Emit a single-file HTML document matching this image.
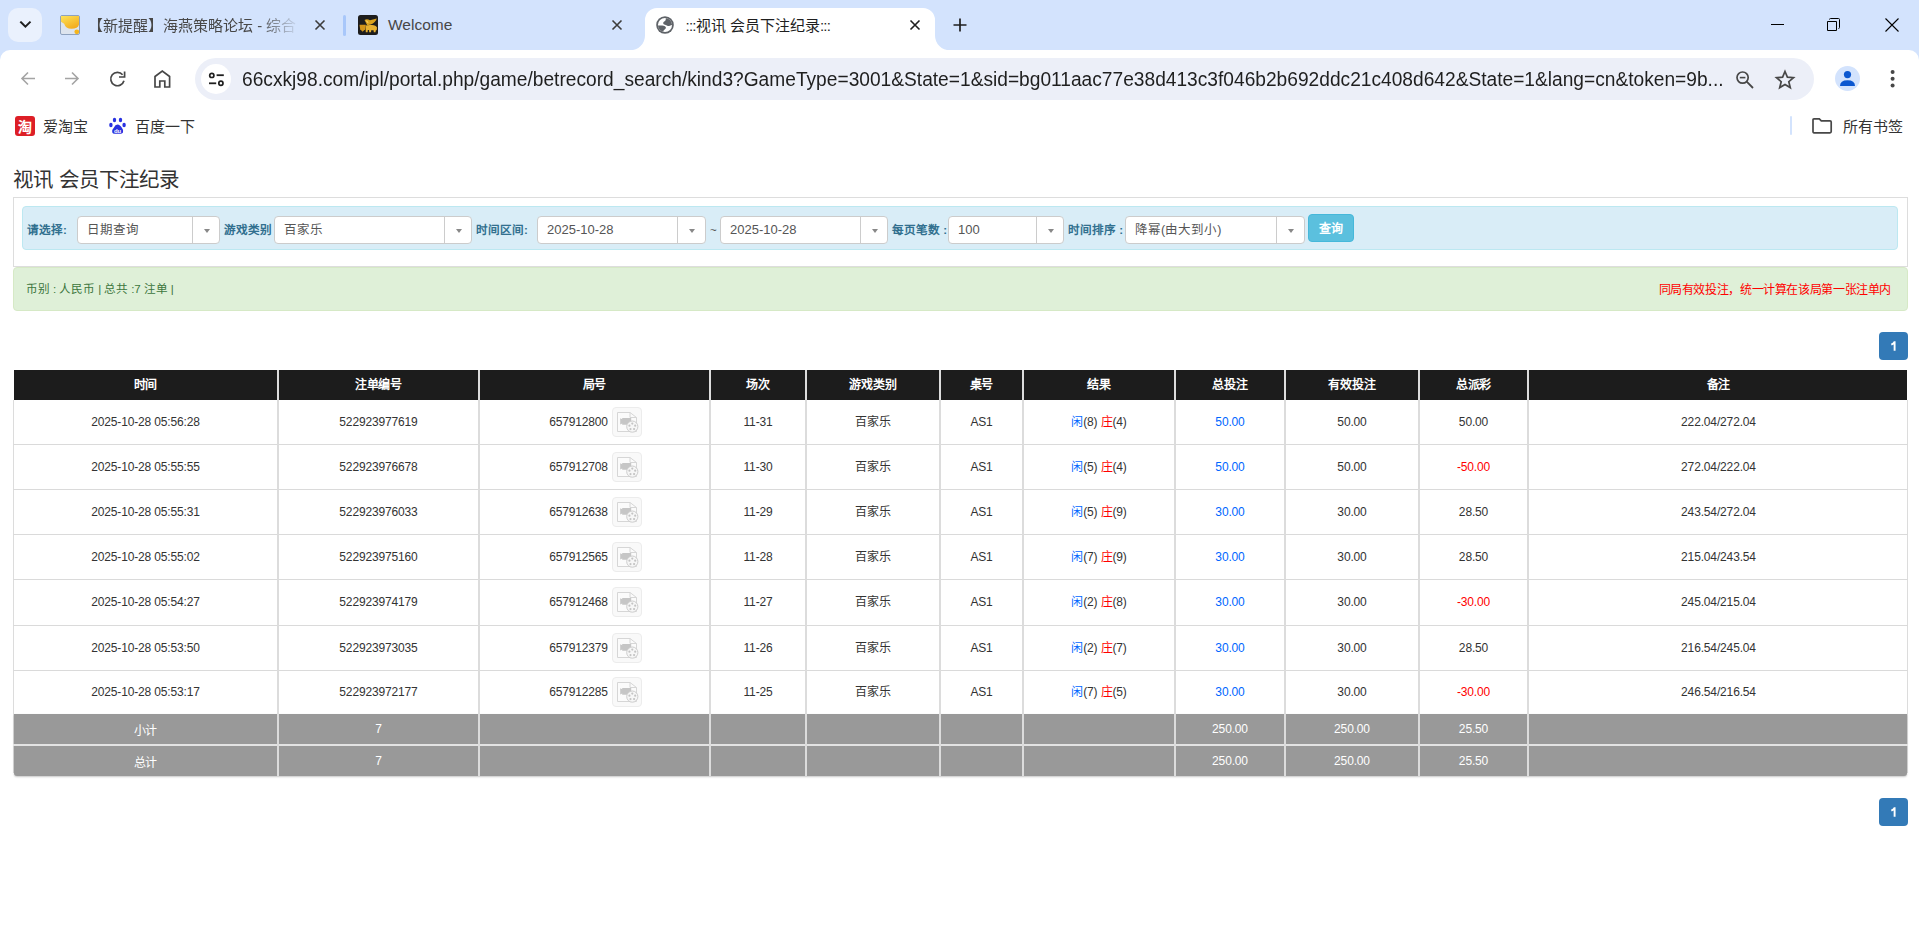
<!DOCTYPE html>
<html lang="zh-CN">
<head>
<meta charset="utf-8">
<title>视讯 会员下注纪录</title>
<style>
*{box-sizing:border-box;margin:0;padding:0}
html,body{width:1919px;height:933px;overflow:hidden;background:#fff}
body{position:relative;font-family:"Liberation Sans",sans-serif;color:#333}
.a{position:absolute}
svg{position:absolute;overflow:visible}
/* chrome */
#strip{left:0;top:0;width:1919px;height:60px;background:#d3e3fd}
#toolbar{left:0;top:50px;width:1919px;height:50px;background:#fff;border-radius:10px 10px 0 0}
.tabtitle{font-size:15px;color:#1f1f1f;white-space:nowrap;line-height:20px}
#omni{left:195px;top:58px;width:1619px;height:42px;border-radius:21px;background:#eceff8}
#url{left:242px;top:67px;font-size:19.5px;line-height:24px;color:#1f1f1f;white-space:nowrap;transform-origin:0 0;transform:scaleX(0.9827)}
.bm{font-size:15px;color:#333;white-space:nowrap;line-height:20px;margin-top:1px}
/* page */
#title{left:13px;top:166px;font-size:20.5px;line-height:28px;color:#333;white-space:nowrap}
#panel{left:13px;top:197px;width:1895px;height:70px;border:1px solid #ddd;background:#fff}
#info{left:22px;top:206px;width:1876px;height:44px;border:1px solid #bce8f1;background:#d9edf7;border-radius:4px}
.lbl{font-size:11.6px;font-weight:bold;color:#31708f;white-space:nowrap;line-height:16px;top:222px}
.sel{top:216px;height:28px;border:1px solid #ccc;background:#fff;border-radius:4px}
.sel .t{position:absolute;left:9px;top:5px;font-size:12.5px;line-height:16px;color:#555;white-space:nowrap}
.sel .d{position:absolute;top:0;bottom:0;width:1px;background:#ccc}
.sel .ar{position:absolute;top:11.5px;width:0;height:0;border-left:3.5px solid transparent;border-right:3.5px solid transparent;border-top:4px solid #888}
#btn{left:1308px;top:214px;width:46px;height:28px;background:#5bc0de;border:1px solid #46b8da;border-radius:4px;color:#fff;font-size:12px;font-weight:bold;line-height:28px;text-align:center}
#ok{left:13px;top:267px;width:1895px;height:44px;border:1px solid #d6e9c6;background:#dff0d8;border-radius:4px}
.c{font-size:12px;letter-spacing:-0.15px;color:#333;text-align:center;white-space:nowrap}
.ic{display:inline-block;position:relative;vertical-align:middle;width:30px;height:30px;margin-left:4px;border:1px solid #ececec;border-radius:4px;background:#f9f9f9;top:-1px}
.pg{left:1879px;width:29px;height:28px;background:#337ab7;border-radius:4px;color:#fff;font-weight:bold;font-size:12px;line-height:28px;text-align:center}
</style>
</head>
<body>
<!-- ============ CHROME FRAME ============ -->
<div id="strip" class="a"></div>
<div id="toolbar" class="a"></div>
<div id="omni" class="a"></div>

<!-- tab search button -->
<div class="a" style="left:8px;top:8px;width:34px;height:34px;border-radius:10px;background:#eaf1fd"></div>
<svg style="left:0;top:0" width="50" height="50"><path d="M21 22.3 L25.4 26.7 L29.8 22.3" fill="none" stroke="#1f1f1f" stroke-width="2" stroke-linecap="square"/></svg>
<!-- tab 1 -->
<svg style="left:60px;top:15px" width="20" height="20"><defs><linearGradient id="yg" x1="0" y1="0" x2="0.6" y2="1"><stop offset="0" stop-color="#fde35a"/><stop offset="1" stop-color="#f3ad1e"/></linearGradient></defs><rect x="0.5" y="0.5" width="19" height="19" rx="1.5" fill="#dde4ee" stroke="#8ea2bf"/><path d="M1 1 H19 V9.5 Q18 13.8 11.5 13.8 Q5.5 13.8 4.2 8.8 L1 6.8 Z" fill="url(#yg)"/><circle cx="16.8" cy="16.8" r="2.4" fill="#f5b51c"/></svg>
<div class="a tabtitle" style="left:88px;top:15.5px;width:212px;color:#474747;overflow:hidden;-webkit-mask-image:linear-gradient(to right,#000 80%,transparent 100%)">【新提醒】海燕策略论坛 - 综合</div>
<svg style="left:315px;top:20px" width="10" height="10"><path d="M0.5 0.5 L9.5 9.5 M9.5 0.5 L0.5 9.5" stroke="#3c3c3c" stroke-width="1.6"/></svg>
<div class="a" style="left:343px;top:15px;width:3px;height:21px;border-radius:2px;background:#a8c7fa"></div>
<!-- tab 2 -->
<svg style="left:358px;top:15px" width="20" height="20"><rect x="0" y="0" width="20" height="20" rx="2.5" fill="#1d1d1d"/><path d="M6.5 5 Q9 3.6 12 5.2 L18.8 3.5 Q17.5 7.5 12.8 9.6 L9.2 10.2 Z" fill="#d9a21f"/><path d="M7.5 10.6 Q10 9.6 14 10 Q18 10 19 12.5 Q19.2 15 17.8 15.5 L17.5 17.3 H15.8 L15.6 15.3 L13.2 15.3 L13 17.3 H11.2 L11 15.1 L9.8 15.1 L9.6 17.3 H7.8 Z" fill="#e6b030"/><path d="M1.5 9.8 L7.8 9.8 L7.2 14.2 L4.6 16.8 L2.2 14.2 Z" fill="#d29419"/><path d="M8 6 Q9.5 5.5 10 8" stroke="#ffe07a" stroke-width="0.8" fill="none"/></svg>
<div class="a tabtitle" style="left:388px;top:15px;color:#474747;font-size:15.5px">Welcome</div>
<svg style="left:612px;top:20px" width="10" height="10"><path d="M0.5 0.5 L9.5 9.5 M9.5 0.5 L0.5 9.5" stroke="#3c3c3c" stroke-width="1.6"/></svg>
<!-- active tab -->
<svg style="left:630px;top:7.5px" width="321" height="43"><path d="M0 42.5 A15 15 0 0 0 15 27.5 L15 12 A12 12 0 0 1 27 0 L293 0 A12 12 0 0 1 305 12 L305 27.5 A15 15 0 0 0 320 42.5 L320 43 L0 43 Z" fill="#fff"/></svg>
<svg style="left:656px;top:16px" width="18" height="18"><defs><clipPath id="gc"><circle cx="9" cy="9" r="7.1"/></clipPath></defs><circle cx="9" cy="9" r="8.8" fill="#5f6368"/><circle cx="9" cy="9" r="7.1" fill="#fff"/><g clip-path="url(#gc)" fill="#5f6368"><path d="M9.8 0 C9.8 3.2 9.9 4.4 9 4.9 C7.4 5.6 6.8 6.8 7.5 8 C8.2 9 10 8.8 11 9.6 C11.7 10.3 13 10.2 13.8 9.8 C14.7 9.3 15.8 9 18 9 L18 0 Z"/><path d="M0 9.4 C3 9.4 6.8 9.2 8.5 10 C10.2 10.8 10.3 12.6 9 13.2 C7.8 13.8 7 14.8 7 18 L0 18 Z"/></g></svg>
<div class="a tabtitle" style="left:685.5px;top:16px"><span style="letter-spacing:-0.75px">:::</span>视讯 会员下注纪录<span style="letter-spacing:-0.75px">:::</span></div>
<svg style="left:910px;top:20px" width="10" height="10"><path d="M0.5 0.5 L9.5 9.5 M9.5 0.5 L0.5 9.5" stroke="#1f1f1f" stroke-width="1.6"/></svg>
<!-- new tab -->
<svg style="left:953px;top:18px" width="14" height="14"><path d="M7 0.5 V13.5 M0.5 7 H13.5" stroke="#1f1f1f" stroke-width="1.7"/></svg>
<!-- window controls -->
<svg style="left:1771px;top:18px" width="14" height="14"><path d="M0 6.5 H13" stroke="#000" stroke-width="1"/></svg>
<svg style="left:1827px;top:18px" width="14" height="14"><path d="M0.5 3.5 H9.5 V12.5 H0.5 Z" fill="none" stroke="#000" stroke-width="1"/><path d="M2.5 1.5 Q2.5 0.5 3.5 0.5 H11.5 Q12.5 0.5 12.5 1.5 V9.5 Q12.5 10.5 11.5 10.5" fill="none" stroke="#000" stroke-width="1"/></svg>
<svg style="left:1885px;top:18px" width="14" height="14"><path d="M0.5 0.5 L13.5 13.5 M13.5 0.5 L0.5 13.5" stroke="#000" stroke-width="1.1"/></svg>
<!-- nav buttons -->
<svg style="left:20px;top:71px" width="16" height="16"><path d="M15 7.5 H2 M8 1.5 L2 7.5 L8 13.5" fill="none" stroke="#a4a4a4" stroke-width="1.6"/></svg>
<svg style="left:65px;top:71px" width="16" height="16"><path d="M0 7.5 H13 M7 1.5 L13 7.5 L7 13.5" fill="none" stroke="#a4a4a4" stroke-width="1.6"/></svg>
<svg style="left:110px;top:71px" width="16" height="16"><path d="M12.63 3.69 A6.7 6.7 0 1 0 13.97 9.73" fill="none" stroke="#474747" stroke-width="1.7"/><path d="M9 6 H14.6 V0.4" fill="none" stroke="#474747" stroke-width="1.7"/></svg>
<svg style="left:154px;top:70px" width="17" height="18"><path d="M1 17 V6.5 L8.3 1 L15.6 6.5 V17 H10.8 V11 H5.8 V17 Z" fill="none" stroke="#474747" stroke-width="1.7" stroke-linejoin="miter"/></svg>
<!-- omnibox -->
<div class="a" style="left:201px;top:64px;width:30px;height:30px;border-radius:15px;background:#fff"></div>
<svg style="left:209px;top:72px" width="16" height="16"><circle cx="2.8" cy="3.4" r="2.1" fill="none" stroke="#1f1f1f" stroke-width="1.7"/><path d="M7.6 3.2 H14.8" stroke="#1f1f1f" stroke-width="1.8"/><circle cx="11.9" cy="11.3" r="2.1" fill="none" stroke="#1f1f1f" stroke-width="1.7"/><path d="M0 11.3 H7.2" stroke="#1f1f1f" stroke-width="1.8"/></svg>
<svg style="left:1736px;top:71px" width="18" height="18"><circle cx="6.6" cy="6.6" r="5.6" fill="none" stroke="#474747" stroke-width="1.7"/><path d="M10.7 10.7 L17 17" stroke="#474747" stroke-width="1.8"/><path d="M3.8 6.6 H9.4" stroke="#474747" stroke-width="1.6"/></svg>
<svg style="left:1775px;top:70px" width="20" height="19"><path d="M10 1.5 L12.4 7.2 L18.5 7.7 L13.8 11.7 L15.3 17.6 L10 14.4 L4.7 17.6 L6.2 11.7 L1.5 7.7 L7.6 7.2 Z" fill="none" stroke="#474747" stroke-width="1.7" stroke-linejoin="miter"/></svg>
<!-- profile & menu -->
<div class="a" style="left:1835px;top:66px;width:25px;height:25px;border-radius:13px;background:#d3e3fd"></div>
<svg style="left:1835px;top:66px" width="25" height="25"><circle cx="12.5" cy="8.6" r="3.6" fill="#0b57d0"/><path d="M5 20 Q5 14.3 12.5 14.3 Q20 14.3 20 20 Z" fill="#0b57d0"/></svg>
<svg style="left:1888px;top:68px" width="10" height="22"><circle cx="4.6" cy="4" r="2" fill="#474747"/><circle cx="4.6" cy="10.8" r="2" fill="#474747"/><circle cx="4.6" cy="17.6" r="2" fill="#474747"/></svg>
<!-- bookmarks bar -->
<svg style="left:15px;top:116px" width="20" height="20"><rect x="0" y="0" width="20" height="20" rx="3" fill="#dd1e26"/><text x="10" y="15.5" font-size="14" font-weight="bold" fill="#fff" text-anchor="middle">淘</text></svg>
<div class="a bm" style="left:43px;top:116px">爱淘宝</div>
<svg style="left:109px;top:117px" width="18" height="19"><ellipse cx="5.5" cy="3" rx="1.7" ry="2.3" fill="#2932e1"/><ellipse cx="11.5" cy="3" rx="1.7" ry="2.3" fill="#2932e1"/><ellipse cx="1.9" cy="8" rx="1.7" ry="2.2" fill="#2932e1"/><ellipse cx="15.1" cy="8" rx="1.7" ry="2.2" fill="#2932e1"/><path d="M8.5 7.5 Q11 7.5 13 11 Q15 13.5 14 15.5 Q13 17 11 16.8 Q8.5 16.5 6 16.8 Q3.8 17 3.2 15.2 Q2.6 13 4.8 10.8 Q6.3 7.5 8.5 7.5 Z" fill="#2932e1"/><text x="8.6" y="15.8" font-size="6" font-weight="bold" fill="#fff" text-anchor="middle">du</text></svg>
<div class="a bm" style="left:135px;top:116px">百度一下</div>
<div class="a" style="left:1790px;top:116px;width:2px;height:19px;border-radius:1px;background:#d3e3fd"></div>
<svg style="left:1812px;top:118px" width="21" height="16"><path d="M1 2 Q1 0.9 2 0.9 H7.3 L9.3 2.9 H18 Q19.2 2.9 19.2 4 V13.6 Q19.2 14.8 18 14.8 H2 Q1 14.8 1 13.6 Z" fill="none" stroke="#474747" stroke-width="1.7"/></svg>
<div class="a bm" style="left:1843px;top:116px">所有书签</div>
<div id="url" class="a">66cxkj98.com/ipl/portal.php/game/betrecord_search/kind3?GameType=3001&amp;State=1&amp;sid=bg011aac77e38d413c3f046b2b692ddc21c408d642&amp;State=1&amp;lang=cn&amp;token=9b...</div>

<!-- ============ PAGE ============ -->
<div id="title" class="a">视讯 会员下注纪录</div>
<div id="panel" class="a"></div>
<div id="info" class="a"></div>
<div id="ok" class="a"></div>
<div class="a lbl" style="left:27px">请选择:</div>
<div class="a sel" style="left:77px;width:143px"><div class="t">日期查询</div><div class="d" style="left:114px"></div><div class="ar" style="left:125.5px"></div></div>
<div class="a lbl" style="left:224px">游戏类别</div>
<div class="a sel" style="left:274px;width:198px"><div class="t">百家乐</div><div class="d" style="left:169px"></div><div class="ar" style="left:180.5px"></div></div>
<div class="a lbl" style="left:476px">时间区间:</div>
<div class="a sel" style="left:537px;width:169px"><div class="t" style="font-size:13px">2025-10-28</div><div class="d" style="left:139px"></div><div class="ar" style="left:151.0px"></div></div>
<div class="a lbl" style="left:710px;font-weight:normal;color:#555">~</div>
<div class="a sel" style="left:720px;width:168px"><div class="t" style="font-size:13px">2025-10-28</div><div class="d" style="left:139px"></div><div class="ar" style="left:150.5px"></div></div>
<div class="a lbl" style="left:892px">每页笔数 :</div>
<div class="a sel" style="left:948px;width:116px"><div class="t" style="font-size:13px">100</div><div class="d" style="left:87px"></div><div class="ar" style="left:98.5px"></div></div>
<div class="a lbl" style="left:1068px">时间排序 :</div>
<div class="a sel" style="left:1125px;width:180px"><div class="t">降幂(由大到小)</div><div class="d" style="left:150px"></div><div class="ar" style="left:162.0px"></div></div>
<div id="btn" class="a">查询</div>
<div class="a" style="left:26px;top:281px;font-size:11.6px;letter-spacing:-0.08px;line-height:16px;color:#3c763d;white-space:nowrap">币别 : 人民币 | 总共 :7 注单 |</div>
<div class="a" style="left:1500px;width:391px;text-align:right;top:281.5px;font-size:12px;letter-spacing:-0.38px;line-height:16px;color:#f00;white-space:nowrap">同局有效投注，统一计算在该局第一张注单内</div>
<div class="a" style="left:13px;top:400px;width:1px;height:373px;background:#dcdcdc"></div>
<div class="a" style="left:1907px;top:400px;width:1px;height:373px;background:#dcdcdc"></div>
<div class="a" style="left:14px;top:370px;width:1893px;height:30px;background:#1c1c1c"></div>

<div class="a" style="left:13px;top:444px;width:1895px;height:1px;background:#dadada"></div>
<div class="a" style="left:13px;top:489px;width:1895px;height:1px;background:#dadada"></div>
<div class="a" style="left:13px;top:534px;width:1895px;height:1px;background:#dadada"></div>
<div class="a" style="left:13px;top:579px;width:1895px;height:1px;background:#dadada"></div>
<div class="a" style="left:13px;top:625px;width:1895px;height:1px;background:#dadada"></div>
<div class="a" style="left:13px;top:670px;width:1895px;height:1px;background:#dadada"></div>
<div class="a" style="left:14px;top:714px;width:1893px;height:62px;background:#999;border-radius:0 0 3px 3px;box-shadow:0 1px 2px rgba(0,0,0,.22)"></div>
<div class="a" style="left:13px;top:744px;width:1895px;height:2px;background:#e3e3e3"></div>
<div class="a" style="left:277px;top:370px;width:2px;height:406px;background:#dcdcdc"></div>
<div class="a" style="left:478px;top:370px;width:2px;height:406px;background:#dcdcdc"></div>
<div class="a" style="left:709px;top:370px;width:2px;height:406px;background:#dcdcdc"></div>
<div class="a" style="left:805px;top:370px;width:2px;height:406px;background:#dcdcdc"></div>
<div class="a" style="left:939px;top:370px;width:2px;height:406px;background:#dcdcdc"></div>
<div class="a" style="left:1022px;top:370px;width:2px;height:406px;background:#dcdcdc"></div>
<div class="a" style="left:1174px;top:370px;width:2px;height:406px;background:#dcdcdc"></div>
<div class="a" style="left:1284px;top:370px;width:2px;height:406px;background:#dcdcdc"></div>
<div class="a" style="left:1418px;top:370px;width:2px;height:406px;background:#dcdcdc"></div>
<div class="a" style="left:1527px;top:370px;width:2px;height:406px;background:#dcdcdc"></div>
<div class="a c" style="left:14px;width:263px;top:370px;height:30px;line-height:30px;color:#fff;font-weight:bold;font-size:12px">时间</div>
<div class="a c" style="left:279px;width:199px;top:370px;height:30px;line-height:30px;color:#fff;font-weight:bold;font-size:12px">注单编号</div>
<div class="a c" style="left:480px;width:229px;top:370px;height:30px;line-height:30px;color:#fff;font-weight:bold;font-size:12px">局号</div>
<div class="a c" style="left:711px;width:94px;top:370px;height:30px;line-height:30px;color:#fff;font-weight:bold;font-size:12px">场次</div>
<div class="a c" style="left:807px;width:132px;top:370px;height:30px;line-height:30px;color:#fff;font-weight:bold;font-size:12px">游戏类别</div>
<div class="a c" style="left:941px;width:81px;top:370px;height:30px;line-height:30px;color:#fff;font-weight:bold;font-size:12px">桌号</div>
<div class="a c" style="left:1024px;width:150px;top:370px;height:30px;line-height:30px;color:#fff;font-weight:bold;font-size:12px">结果</div>
<div class="a c" style="left:1176px;width:108px;top:370px;height:30px;line-height:30px;color:#fff;font-weight:bold;font-size:12px">总投注</div>
<div class="a c" style="left:1286px;width:132px;top:370px;height:30px;line-height:30px;color:#fff;font-weight:bold;font-size:12px">有效投注</div>
<div class="a c" style="left:1420px;width:107px;top:370px;height:30px;line-height:30px;color:#fff;font-weight:bold;font-size:12px">总派彩</div>
<div class="a c" style="left:1529px;width:379px;top:370px;height:30px;line-height:30px;color:#fff;font-weight:bold;font-size:12px">备注</div>
<div class="a c" style="left:14px;width:263px;top:400px;height:44px;line-height:44px">2025-10-28 05:56:28</div>
<div class="a c" style="left:279px;width:199px;top:400px;height:44px;line-height:44px">522923977619</div>
<div class="a c" style="left:480px;width:229px;top:400px;height:44px;padding-left:2px;line-height:44px">657912800<span class="ic"><svg width="22" height="22" style="position:absolute;left:4px;top:4px"><path d="M0.5 0.5 H13 L19.5 5.5 V19.5 H0.5 Z" fill="#fbfbfb" stroke="#d6d6d6" stroke-width="1"/><path d="M13 0.5 V5.5 H19.5" fill="none" stroke="#d6d6d6" stroke-width="1"/><path d="M3.2 6.2 L5.2 7.3 L5.2 6 H14.2 V12.7 H5.2 V11.5 L3.2 12.6 Z" fill="#c6c6c6"/><circle cx="15.3" cy="14.6" r="5.6" fill="#f7f7f7" stroke="#cdcdcd" stroke-width="1"/><circle cx="15.3" cy="11.6" r="1.1" fill="#c4c4c4"/><circle cx="18.2" cy="13.7" r="1.1" fill="#c4c4c4"/><circle cx="17.1" cy="17.1" r="1.1" fill="#c4c4c4"/><circle cx="13.5" cy="17.1" r="1.1" fill="#c4c4c4"/><circle cx="12.4" cy="13.7" r="1.1" fill="#c4c4c4"/></svg></span></div>
<div class="a c" style="left:711px;width:94px;top:400px;height:44px;line-height:44px">11-31</div>
<div class="a c" style="left:807px;width:132px;top:400px;height:44px;line-height:44px;font-size:12px">百家乐</div>
<div class="a c" style="left:941px;width:81px;top:400px;height:44px;line-height:44px">AS1</div>
<div class="a c" style="left:1024px;width:150px;top:400px;height:44px;line-height:44px"><span style="color:#06f">闲</span>(8) <span style="color:#f00">庄</span>(4)</div>
<div class="a c" style="left:1176px;width:108px;top:400px;height:44px;line-height:44px;color:#06f">50.00</div>
<div class="a c" style="left:1286px;width:132px;top:400px;height:44px;line-height:44px">50.00</div>
<div class="a c" style="left:1420px;width:107px;top:400px;height:44px;line-height:44px">50.00</div>
<div class="a c" style="left:1529px;width:379px;top:400px;height:44px;line-height:44px">222.04/272.04</div>
<div class="a c" style="left:14px;width:263px;top:445px;height:44px;line-height:44px">2025-10-28 05:55:55</div>
<div class="a c" style="left:279px;width:199px;top:445px;height:44px;line-height:44px">522923976678</div>
<div class="a c" style="left:480px;width:229px;top:445px;height:44px;padding-left:2px;line-height:44px">657912708<span class="ic"><svg width="22" height="22" style="position:absolute;left:4px;top:4px"><path d="M0.5 0.5 H13 L19.5 5.5 V19.5 H0.5 Z" fill="#fbfbfb" stroke="#d6d6d6" stroke-width="1"/><path d="M13 0.5 V5.5 H19.5" fill="none" stroke="#d6d6d6" stroke-width="1"/><path d="M3.2 6.2 L5.2 7.3 L5.2 6 H14.2 V12.7 H5.2 V11.5 L3.2 12.6 Z" fill="#c6c6c6"/><circle cx="15.3" cy="14.6" r="5.6" fill="#f7f7f7" stroke="#cdcdcd" stroke-width="1"/><circle cx="15.3" cy="11.6" r="1.1" fill="#c4c4c4"/><circle cx="18.2" cy="13.7" r="1.1" fill="#c4c4c4"/><circle cx="17.1" cy="17.1" r="1.1" fill="#c4c4c4"/><circle cx="13.5" cy="17.1" r="1.1" fill="#c4c4c4"/><circle cx="12.4" cy="13.7" r="1.1" fill="#c4c4c4"/></svg></span></div>
<div class="a c" style="left:711px;width:94px;top:445px;height:44px;line-height:44px">11-30</div>
<div class="a c" style="left:807px;width:132px;top:445px;height:44px;line-height:44px;font-size:12px">百家乐</div>
<div class="a c" style="left:941px;width:81px;top:445px;height:44px;line-height:44px">AS1</div>
<div class="a c" style="left:1024px;width:150px;top:445px;height:44px;line-height:44px"><span style="color:#06f">闲</span>(5) <span style="color:#f00">庄</span>(4)</div>
<div class="a c" style="left:1176px;width:108px;top:445px;height:44px;line-height:44px;color:#06f">50.00</div>
<div class="a c" style="left:1286px;width:132px;top:445px;height:44px;line-height:44px">50.00</div>
<div class="a c" style="left:1420px;width:107px;top:445px;height:44px;line-height:44px;color:#f00">-50.00</div>
<div class="a c" style="left:1529px;width:379px;top:445px;height:44px;line-height:44px">272.04/222.04</div>
<div class="a c" style="left:14px;width:263px;top:490px;height:44px;line-height:44px">2025-10-28 05:55:31</div>
<div class="a c" style="left:279px;width:199px;top:490px;height:44px;line-height:44px">522923976033</div>
<div class="a c" style="left:480px;width:229px;top:490px;height:44px;padding-left:2px;line-height:44px">657912638<span class="ic"><svg width="22" height="22" style="position:absolute;left:4px;top:4px"><path d="M0.5 0.5 H13 L19.5 5.5 V19.5 H0.5 Z" fill="#fbfbfb" stroke="#d6d6d6" stroke-width="1"/><path d="M13 0.5 V5.5 H19.5" fill="none" stroke="#d6d6d6" stroke-width="1"/><path d="M3.2 6.2 L5.2 7.3 L5.2 6 H14.2 V12.7 H5.2 V11.5 L3.2 12.6 Z" fill="#c6c6c6"/><circle cx="15.3" cy="14.6" r="5.6" fill="#f7f7f7" stroke="#cdcdcd" stroke-width="1"/><circle cx="15.3" cy="11.6" r="1.1" fill="#c4c4c4"/><circle cx="18.2" cy="13.7" r="1.1" fill="#c4c4c4"/><circle cx="17.1" cy="17.1" r="1.1" fill="#c4c4c4"/><circle cx="13.5" cy="17.1" r="1.1" fill="#c4c4c4"/><circle cx="12.4" cy="13.7" r="1.1" fill="#c4c4c4"/></svg></span></div>
<div class="a c" style="left:711px;width:94px;top:490px;height:44px;line-height:44px">11-29</div>
<div class="a c" style="left:807px;width:132px;top:490px;height:44px;line-height:44px;font-size:12px">百家乐</div>
<div class="a c" style="left:941px;width:81px;top:490px;height:44px;line-height:44px">AS1</div>
<div class="a c" style="left:1024px;width:150px;top:490px;height:44px;line-height:44px"><span style="color:#06f">闲</span>(5) <span style="color:#f00">庄</span>(9)</div>
<div class="a c" style="left:1176px;width:108px;top:490px;height:44px;line-height:44px;color:#06f">30.00</div>
<div class="a c" style="left:1286px;width:132px;top:490px;height:44px;line-height:44px">30.00</div>
<div class="a c" style="left:1420px;width:107px;top:490px;height:44px;line-height:44px">28.50</div>
<div class="a c" style="left:1529px;width:379px;top:490px;height:44px;line-height:44px">243.54/272.04</div>
<div class="a c" style="left:14px;width:263px;top:535px;height:44px;line-height:44px">2025-10-28 05:55:02</div>
<div class="a c" style="left:279px;width:199px;top:535px;height:44px;line-height:44px">522923975160</div>
<div class="a c" style="left:480px;width:229px;top:535px;height:44px;padding-left:2px;line-height:44px">657912565<span class="ic"><svg width="22" height="22" style="position:absolute;left:4px;top:4px"><path d="M0.5 0.5 H13 L19.5 5.5 V19.5 H0.5 Z" fill="#fbfbfb" stroke="#d6d6d6" stroke-width="1"/><path d="M13 0.5 V5.5 H19.5" fill="none" stroke="#d6d6d6" stroke-width="1"/><path d="M3.2 6.2 L5.2 7.3 L5.2 6 H14.2 V12.7 H5.2 V11.5 L3.2 12.6 Z" fill="#c6c6c6"/><circle cx="15.3" cy="14.6" r="5.6" fill="#f7f7f7" stroke="#cdcdcd" stroke-width="1"/><circle cx="15.3" cy="11.6" r="1.1" fill="#c4c4c4"/><circle cx="18.2" cy="13.7" r="1.1" fill="#c4c4c4"/><circle cx="17.1" cy="17.1" r="1.1" fill="#c4c4c4"/><circle cx="13.5" cy="17.1" r="1.1" fill="#c4c4c4"/><circle cx="12.4" cy="13.7" r="1.1" fill="#c4c4c4"/></svg></span></div>
<div class="a c" style="left:711px;width:94px;top:535px;height:44px;line-height:44px">11-28</div>
<div class="a c" style="left:807px;width:132px;top:535px;height:44px;line-height:44px;font-size:12px">百家乐</div>
<div class="a c" style="left:941px;width:81px;top:535px;height:44px;line-height:44px">AS1</div>
<div class="a c" style="left:1024px;width:150px;top:535px;height:44px;line-height:44px"><span style="color:#06f">闲</span>(7) <span style="color:#f00">庄</span>(9)</div>
<div class="a c" style="left:1176px;width:108px;top:535px;height:44px;line-height:44px;color:#06f">30.00</div>
<div class="a c" style="left:1286px;width:132px;top:535px;height:44px;line-height:44px">30.00</div>
<div class="a c" style="left:1420px;width:107px;top:535px;height:44px;line-height:44px">28.50</div>
<div class="a c" style="left:1529px;width:379px;top:535px;height:44px;line-height:44px">215.04/243.54</div>
<div class="a c" style="left:14px;width:263px;top:580px;height:45px;line-height:45px">2025-10-28 05:54:27</div>
<div class="a c" style="left:279px;width:199px;top:580px;height:45px;line-height:45px">522923974179</div>
<div class="a c" style="left:480px;width:229px;top:580px;height:45px;padding-left:2px;line-height:45px">657912468<span class="ic"><svg width="22" height="22" style="position:absolute;left:4px;top:4px"><path d="M0.5 0.5 H13 L19.5 5.5 V19.5 H0.5 Z" fill="#fbfbfb" stroke="#d6d6d6" stroke-width="1"/><path d="M13 0.5 V5.5 H19.5" fill="none" stroke="#d6d6d6" stroke-width="1"/><path d="M3.2 6.2 L5.2 7.3 L5.2 6 H14.2 V12.7 H5.2 V11.5 L3.2 12.6 Z" fill="#c6c6c6"/><circle cx="15.3" cy="14.6" r="5.6" fill="#f7f7f7" stroke="#cdcdcd" stroke-width="1"/><circle cx="15.3" cy="11.6" r="1.1" fill="#c4c4c4"/><circle cx="18.2" cy="13.7" r="1.1" fill="#c4c4c4"/><circle cx="17.1" cy="17.1" r="1.1" fill="#c4c4c4"/><circle cx="13.5" cy="17.1" r="1.1" fill="#c4c4c4"/><circle cx="12.4" cy="13.7" r="1.1" fill="#c4c4c4"/></svg></span></div>
<div class="a c" style="left:711px;width:94px;top:580px;height:45px;line-height:45px">11-27</div>
<div class="a c" style="left:807px;width:132px;top:580px;height:45px;line-height:45px;font-size:12px">百家乐</div>
<div class="a c" style="left:941px;width:81px;top:580px;height:45px;line-height:45px">AS1</div>
<div class="a c" style="left:1024px;width:150px;top:580px;height:45px;line-height:45px"><span style="color:#06f">闲</span>(2) <span style="color:#f00">庄</span>(8)</div>
<div class="a c" style="left:1176px;width:108px;top:580px;height:45px;line-height:45px;color:#06f">30.00</div>
<div class="a c" style="left:1286px;width:132px;top:580px;height:45px;line-height:45px">30.00</div>
<div class="a c" style="left:1420px;width:107px;top:580px;height:45px;line-height:45px;color:#f00">-30.00</div>
<div class="a c" style="left:1529px;width:379px;top:580px;height:45px;line-height:45px">245.04/215.04</div>
<div class="a c" style="left:14px;width:263px;top:626px;height:44px;line-height:44px">2025-10-28 05:53:50</div>
<div class="a c" style="left:279px;width:199px;top:626px;height:44px;line-height:44px">522923973035</div>
<div class="a c" style="left:480px;width:229px;top:626px;height:44px;padding-left:2px;line-height:44px">657912379<span class="ic"><svg width="22" height="22" style="position:absolute;left:4px;top:4px"><path d="M0.5 0.5 H13 L19.5 5.5 V19.5 H0.5 Z" fill="#fbfbfb" stroke="#d6d6d6" stroke-width="1"/><path d="M13 0.5 V5.5 H19.5" fill="none" stroke="#d6d6d6" stroke-width="1"/><path d="M3.2 6.2 L5.2 7.3 L5.2 6 H14.2 V12.7 H5.2 V11.5 L3.2 12.6 Z" fill="#c6c6c6"/><circle cx="15.3" cy="14.6" r="5.6" fill="#f7f7f7" stroke="#cdcdcd" stroke-width="1"/><circle cx="15.3" cy="11.6" r="1.1" fill="#c4c4c4"/><circle cx="18.2" cy="13.7" r="1.1" fill="#c4c4c4"/><circle cx="17.1" cy="17.1" r="1.1" fill="#c4c4c4"/><circle cx="13.5" cy="17.1" r="1.1" fill="#c4c4c4"/><circle cx="12.4" cy="13.7" r="1.1" fill="#c4c4c4"/></svg></span></div>
<div class="a c" style="left:711px;width:94px;top:626px;height:44px;line-height:44px">11-26</div>
<div class="a c" style="left:807px;width:132px;top:626px;height:44px;line-height:44px;font-size:12px">百家乐</div>
<div class="a c" style="left:941px;width:81px;top:626px;height:44px;line-height:44px">AS1</div>
<div class="a c" style="left:1024px;width:150px;top:626px;height:44px;line-height:44px"><span style="color:#06f">闲</span>(2) <span style="color:#f00">庄</span>(7)</div>
<div class="a c" style="left:1176px;width:108px;top:626px;height:44px;line-height:44px;color:#06f">30.00</div>
<div class="a c" style="left:1286px;width:132px;top:626px;height:44px;line-height:44px">30.00</div>
<div class="a c" style="left:1420px;width:107px;top:626px;height:44px;line-height:44px">28.50</div>
<div class="a c" style="left:1529px;width:379px;top:626px;height:44px;line-height:44px">216.54/245.04</div>
<div class="a c" style="left:14px;width:263px;top:671px;height:43px;line-height:43px">2025-10-28 05:53:17</div>
<div class="a c" style="left:279px;width:199px;top:671px;height:43px;line-height:43px">522923972177</div>
<div class="a c" style="left:480px;width:229px;top:671px;height:43px;padding-left:2px;line-height:43px">657912285<span class="ic"><svg width="22" height="22" style="position:absolute;left:4px;top:4px"><path d="M0.5 0.5 H13 L19.5 5.5 V19.5 H0.5 Z" fill="#fbfbfb" stroke="#d6d6d6" stroke-width="1"/><path d="M13 0.5 V5.5 H19.5" fill="none" stroke="#d6d6d6" stroke-width="1"/><path d="M3.2 6.2 L5.2 7.3 L5.2 6 H14.2 V12.7 H5.2 V11.5 L3.2 12.6 Z" fill="#c6c6c6"/><circle cx="15.3" cy="14.6" r="5.6" fill="#f7f7f7" stroke="#cdcdcd" stroke-width="1"/><circle cx="15.3" cy="11.6" r="1.1" fill="#c4c4c4"/><circle cx="18.2" cy="13.7" r="1.1" fill="#c4c4c4"/><circle cx="17.1" cy="17.1" r="1.1" fill="#c4c4c4"/><circle cx="13.5" cy="17.1" r="1.1" fill="#c4c4c4"/><circle cx="12.4" cy="13.7" r="1.1" fill="#c4c4c4"/></svg></span></div>
<div class="a c" style="left:711px;width:94px;top:671px;height:43px;line-height:43px">11-25</div>
<div class="a c" style="left:807px;width:132px;top:671px;height:43px;line-height:43px;font-size:12px">百家乐</div>
<div class="a c" style="left:941px;width:81px;top:671px;height:43px;line-height:43px">AS1</div>
<div class="a c" style="left:1024px;width:150px;top:671px;height:43px;line-height:43px"><span style="color:#06f">闲</span>(7) <span style="color:#f00">庄</span>(5)</div>
<div class="a c" style="left:1176px;width:108px;top:671px;height:43px;line-height:43px;color:#06f">30.00</div>
<div class="a c" style="left:1286px;width:132px;top:671px;height:43px;line-height:43px">30.00</div>
<div class="a c" style="left:1420px;width:107px;top:671px;height:43px;line-height:43px;color:#f00">-30.00</div>
<div class="a c" style="left:1529px;width:379px;top:671px;height:43px;line-height:43px">246.54/216.54</div>
<div class="a c" style="left:14px;width:263px;top:714px;height:30px;line-height:30px;color:#fff;font-size:12px;padding-top:2px">小计</div>
<div class="a c" style="left:279px;width:199px;top:714px;height:30px;line-height:30px;color:#fff">7</div>
<div class="a c" style="left:1176px;width:108px;top:714px;height:30px;line-height:30px;color:#fff">250.00</div>
<div class="a c" style="left:1286px;width:132px;top:714px;height:30px;line-height:30px;color:#fff">250.00</div>
<div class="a c" style="left:1420px;width:107px;top:714px;height:30px;line-height:30px;color:#fff">25.50</div>
<div class="a c" style="left:14px;width:263px;top:746px;height:30px;line-height:30px;color:#fff;font-size:12px;padding-top:2px">总计</div>
<div class="a c" style="left:279px;width:199px;top:746px;height:30px;line-height:30px;color:#fff">7</div>
<div class="a c" style="left:1176px;width:108px;top:746px;height:30px;line-height:30px;color:#fff">250.00</div>
<div class="a c" style="left:1286px;width:132px;top:746px;height:30px;line-height:30px;color:#fff">250.00</div>
<div class="a c" style="left:1420px;width:107px;top:746px;height:30px;line-height:30px;color:#fff">25.50</div>
<div class="a pg" style="top:332px"><svg style="left:11px;top:9px" width="8" height="10"><path d="M4.6 0.3 V9.7 M4.6 0.8 Q3.8 2.6 1.3 3.6" fill="none" stroke="#fff" stroke-width="1.9"/></svg></div>
<div class="a pg" style="top:798px"><svg style="left:11px;top:9px" width="8" height="10"><path d="M4.6 0.3 V9.7 M4.6 0.8 Q3.8 2.6 1.3 3.6" fill="none" stroke="#fff" stroke-width="1.9"/></svg></div>
</body>
</html>
